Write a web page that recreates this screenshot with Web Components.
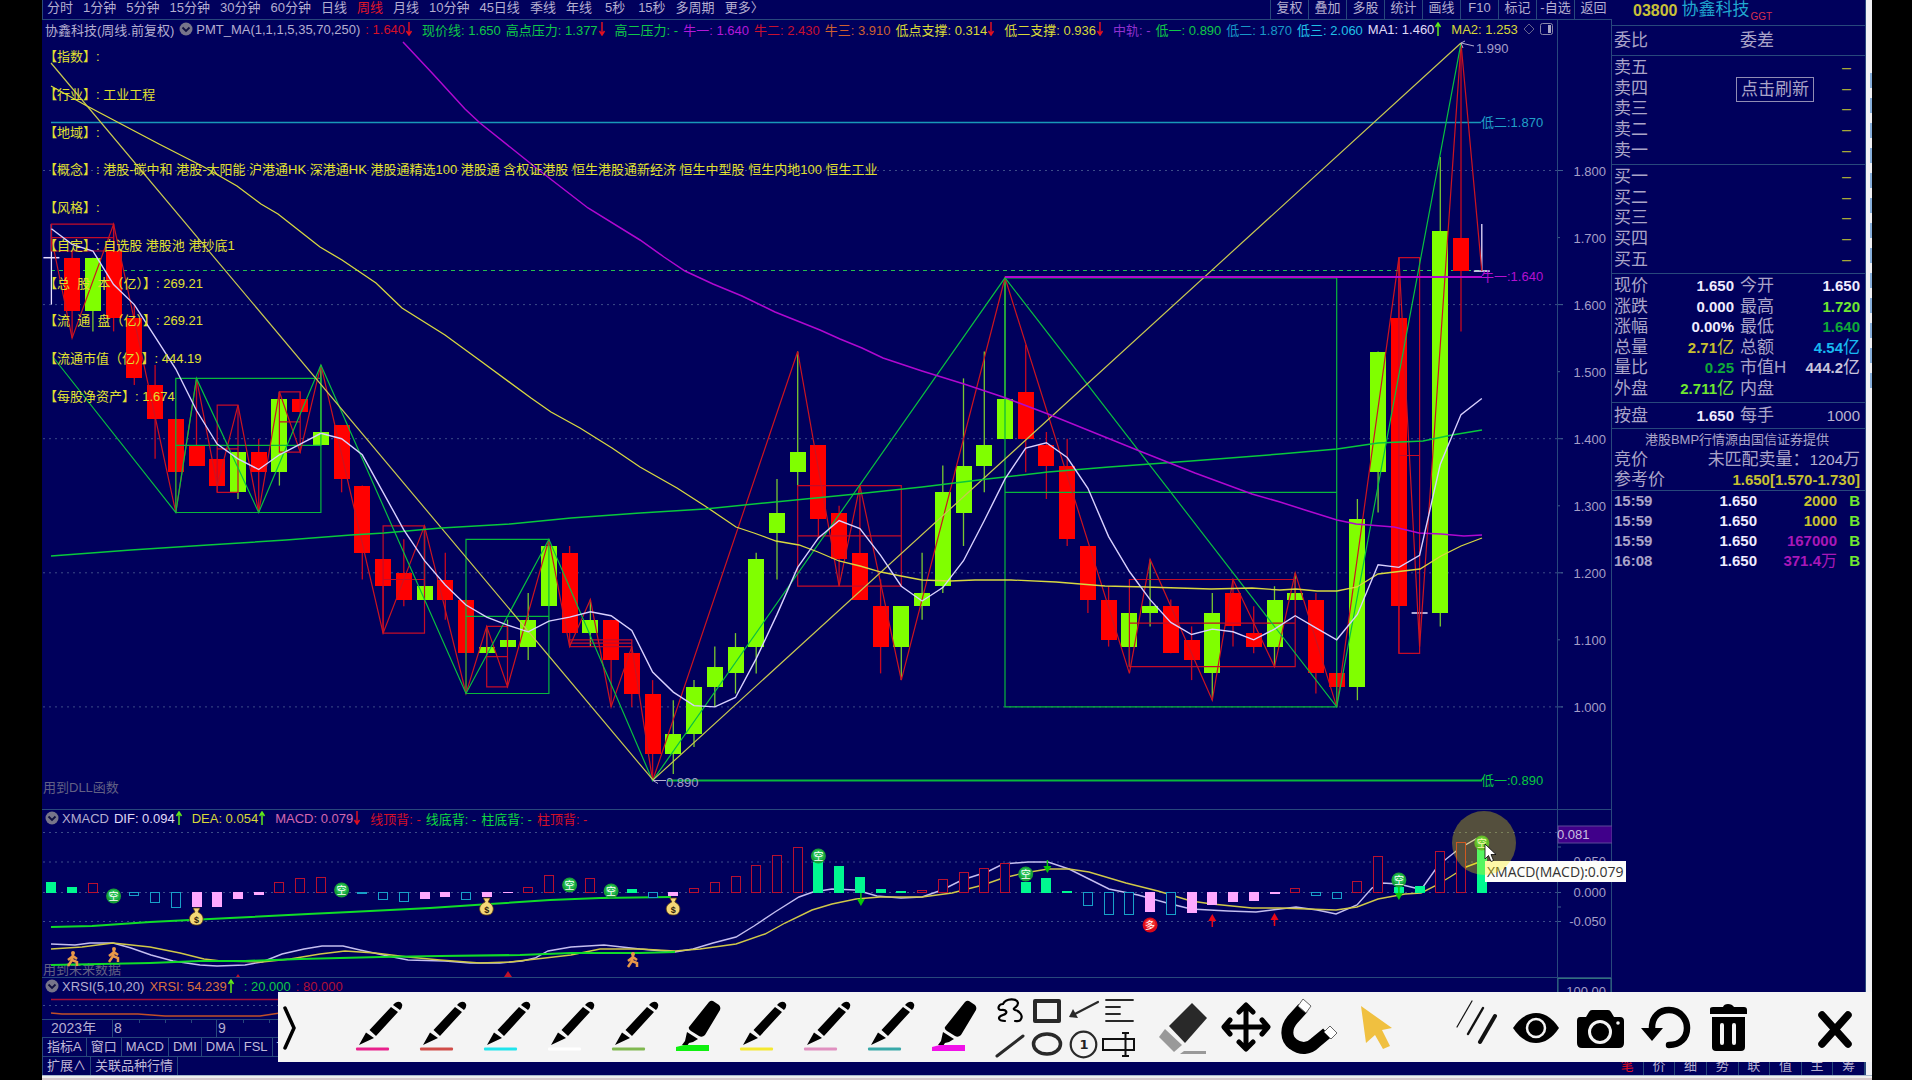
<!DOCTYPE html>
<html lang="zh-CN">
<head>
<meta charset="utf-8">
<title>协鑫科技 周线</title>
<style>
html,body{margin:0;background:#000}
body{font-family:"Liberation Sans","Noto Sans CJK SC",sans-serif;font-size:13px;color:#b4aed0;
 --bg:#00005c;--rule:#28487c;--cyan:#20a8d0}
</style>
</head>
<body>
<stock-app></stock-app>
<script>
const define=(name,html,ready)=>{
  const t=document.createElement('template');
  t.innerHTML=html;
  customElements.define(name,class extends HTMLElement{
    connectedCallback(){
      if(this.shadowRoot)return;
      this.attachShadow({mode:'open'}).append(t.content.cloneNode(true));
      if(ready)ready(this.shadowRoot,this);
    }
  });
};
const BTN='button{font:inherit;color:inherit;background:none;border:0;padding:0;margin:0;white-space:nowrap;line-height:inherit}';
const UP='<svg width="12" height="14" viewBox="0 0 12 14"><path d="M4 14V2M1.5 5L4 1L6.500 5" stroke="#60e818" stroke-width="1.500" fill="none"/></svg>';
const DOWN='<svg width="12" height="14" viewBox="0 0 12 14"><path d="M4 0V12M1.500 9L4 13L6.500 9" stroke="#e01020" stroke-width="1.500" fill="none"/></svg>';

/* geometry shared by all panes: one bar every STEP units, 70 bars */
const X0=51.4,STEP=20.73,bx=i=>+(X0+STEP*i).toFixed(1);
const py=p=>+(170.5+(1.8-p)*670.5).toFixed(1);
const line=(pts,c,w=1)=>`<polyline points="${pts}" fill="none" stroke="${c}" stroke-width="${w}"/>`;
const zig=a=>a.map(([i,p])=>bx(i)+','+py(p)).join(' ');

/* ---------- period bar ---------- */
define('period-bar',`<style>:host{display:flex;justify-content:space-between;height:19px;line-height:16px;border-bottom:1px solid var(--rule);border-left:1px solid var(--rule)}
${BTN} button{padding-bottom:3px}nav{display:flex}.p{gap:10px;padding-left:4px}.p .on{color:#e01828}.p .s{padding:0 3px 3px}
.t button{width:38px;box-sizing:border-box;border-left:1px solid var(--rule);text-align:center}</style>
<nav class="p"></nav><nav class="t"></nav>`,r=>{
  r.querySelector('.p').innerHTML='分时 1分钟 5分钟 15分钟 30分钟 60分钟 日线 周线 月线 10分钟 45日线 季线 年线 5秒 15秒 多周期 更多〉'.split(' ')
   .map(s=>`<button class="${s=='周线'?'on':s=='5秒'?'s':''}">${s}</button>`).join('');
  r.querySelector('.t').innerHTML='复权 叠加 多股 统计 画线 F10 标记 -自选 返回'.split(' ').map(s=>`<button>${s}</button>`).join('');
});

/* ---------- indicator header: one legend item each ---------- */
define('legend-item',`<style>:host{display:flex;align-items:center;white-space:pre}span{display:flex}</style><slot></slot><span></span>`,(r,h)=>{
  const d=h.getAttribute('dir-mark');if(d)r.querySelector('span').innerHTML=d=='up'?UP:DOWN;
  h.style.color=h.getAttribute('tint');
});
define('legend-row',`<style>:host{display:flex;gap:5px;align-items:center;height:18px;padding-left:3px;white-space:nowrap;z-index:1}
svg{flex:none;margin-right:-2px}</style><slot name="lead"></slot><svg width="14" height="14" viewBox="0 0 14 14"><circle cx="7" cy="7" r="6.500" fill="#77758a"/><path d="M3.500 5.500L7 9L10.500 5.500" fill="none" stroke="#101040" stroke-width="1.800"/></svg><slot></slot>`);
const items=a=>a.map(([t,c,d])=>`<legend-item tint="${c}"${d?` dir-mark="${d}"`:''}>${t}</legend-item>`).join('');

/* ---------- candle chart: kind, body top, body bottom, high, low ---------- */
const C=`w 1.67 1.67 1.72 1.60|r 1.67 1.59 1.68 1.55|g 1.67 1.59 1.67 1.56|r 1.68 1.58 1.72 1.56|r 1.58 1.49 1.60 1.48|r 1.48 1.43 1.51 1.37|r 1.43 1.35 1.43 1.29|r 1.39 1.36 1.49 1.36|r 1.37 1.33 1.37 1.32|g 1.38 1.32 1.38 1.31|r 1.38 1.35 1.40 1.29|g 1.46 1.35 1.47 1.33|r 1.46 1.44 1.47 1.44|g 1.41 1.39 1.51 1.39|r 1.42 1.34 1.42 1.32|r 1.33 1.23 1.33 1.19|r 1.22 1.18 1.22 1.11|r 1.20 1.16 1.25 1.15|g 1.18 1.16 1.27 1.16|r 1.19 1.16 1.23 1.13|r 1.16 1.08 1.16 1.02|g 1.09 1.08 1.12 1.08|g 1.10 1.09 1.13 1.09|g 1.13 1.09 1.17 1.07|g 1.24 1.15 1.25 1.15|r 1.23 1.11 1.24 1.09|g 1.13 1.11 1.16 1.09|r 1.13 1.07 1.13 1.00|r 1.08 1.02 1.09 1.00|r 1.02 0.93 1.04 0.89|g 0.96 0.93 1.01 0.90|g 1.03 0.96 1.04 0.94|g 1.06 1.03 1.09 1.00|g 1.09 1.05 1.11 1.02|g 1.22 1.09 1.23 1.05|g 1.29 1.26 1.34 1.19|g 1.38 1.35 1.53 1.33|r 1.39 1.28 1.39 1.25|r 1.29 1.22 1.30 1.18|r 1.23 1.16 1.33 1.16|r 1.15 1.09 1.19 1.05|g 1.15 1.09 1.15 1.04|g 1.17 1.15 1.23 1.13|g 1.32 1.18 1.36 1.17|g 1.36 1.29 1.49 1.24|g 1.39 1.36 1.53 1.32|g 1.46 1.40 1.64 1.40|r 1.47 1.40 1.54 1.35|r 1.39 1.36 1.41 1.31|r 1.36 1.25 1.40 1.24|r 1.24 1.16 1.24 1.14|r 1.16 1.10 1.18 1.09|g 1.14 1.09 1.14 1.06|g 1.15 1.14 1.22 1.12|r 1.15 1.08 1.16 1.08|r 1.10 1.07 1.12 1.04|g 1.14 1.05 1.17 1.01|r 1.17 1.12 1.19 1.09|r 1.11 1.09 1.15 1.08|g 1.16 1.09 1.18 1.06|g 1.17 1.16 1.20 1.16|r 1.16 1.05 1.17 1.02|r 1.05 1.03 1.05 1.00|g 1.28 1.03 1.31 1.01|g 1.53 1.35 1.53 1.29|r 1.58 1.15 1.67 1.08|w 1.14 1.14 1.14 1.14|g 1.71 1.14 1.82 1.12|r 1.70 1.65 1.99 1.56|w 1.65 1.65 1.72 1.65`
 .split('|').map(s=>{const a=s.split(' ');return{k:a[0],t:+a[1],b:+a[2],h:+a[3],l:+a[4]}});
const close=c=>c.k=='g'?c.t:c.b;
function candleSvg(){
  let s='';
  for(const p of[1.8,1.6,1.4,1.2,1])s+=`<path d="M43 ${py(p)}H1563" stroke="#3c4c88" stroke-dasharray="2 4"/>`;
  for(let k=0;k<9;k++){const p=1+k/10,y=py(p);s+=`<path d="M1557 ${y}h${k%2?3:6}" stroke="#3c5c8c"/><text x="1606" y="${y+5}" text-anchor="end">${p.toFixed(3)}</text>`}
  s+='<path d="M1557.500 20V809M1611.500 20V809" stroke="var(--rule)"/>';
  s+=`<path d="M51 122.500H1481" stroke="#1898b8" stroke-width="1.500"/><path d="M51 270.500H1490" stroke="#28c050" stroke-dasharray="4 4"/>`;
  C.forEach((c,i)=>{
    const x=bx(i),col=c.k=='r'?'#ff0000':c.k=='g'?'#80ff00':'#e8e0ff';
    if(c.h>c.l)s+=`<path d="M${x} ${py(c.h)}V${py(c.l)}" stroke="${c.k=='r'?'#c80820':c.k=='g'?'#78c830':col}" stroke-width="1.300"/>`;
    s+=c.k=='w'?`<path d="M${x-8} ${py(c.t)}h16" stroke="${col}" stroke-width="1.500"/>`
      :`<rect x="${x-8}" y="${py(c.t)}" width="16" height="${(py(c.b)-py(c.t)).toFixed(1)}" fill="${col}" shape-rendering="crispEdges"/>`;
  });
  const box=(a,b,hi,lo,c)=>{const m=(hi+lo)/2;return`<path d="M${bx(a)} ${py(hi)}H${bx(b)}V${py(lo)}H${bx(a)}ZM${bx(a)} ${py(m)}H${bx(b)}" fill="none" stroke="${c}" stroke-width="1.200"/>`};
  for(const b of[[0,3,1.72,1.68],[8,9,1.45,1.32],[11,12,1.47,1.38],[16,18,1.27,1.11],[21,22,1.12,1.03],[25,28,1.1,1.09],[36,41,1.33,1.18],[52,60,1.19,1.06],[65,66,1.67,1.08]])s+=box(...b,'#c40c28');
  for(const b of[[6,13,1.49,1.29],[20,24,1.25,1.02],[46,62,1.64,1]])s+=box(...b,'#08b83c');
  s+=line(zig([[0,1.7],[1,1.55],[3,1.72],[6,1.29],[7,1.49],[8,1.33],[9,1.45],[10,1.29],[11,1.47],[12,1.38],[13,1.51],[16,1.11],[18,1.27],[20,1.02],[21,1.12],[22,1.03],[24,1.25],[25,1.09],[26,1.16],[27,1],[28,1.09],[29,.89],[36,1.53],[38,1.18],[39,1.33],[41,1.04],[46,1.64],[52,1.05],[53,1.22],[56,1.01],[57,1.19],[59,1.06],[60,1.2],[62,1],[65,1.67],[66,1.09],[68,1.99],[69,1.65]]),'#cc1420',1.2);
  s+=line('53,357 '+zig([[6,1.29],[7,1.49],[10,1.29],[13,1.51],[20,1.02],[24,1.25],[29,.89],[46,1.64],[62,1],[68,1.99]]),'#08c040',1.2);
  s+=line('51,63 653,780 1461,43','#c8c850',1.2);
  s+=line('51,86 87,106 159,144 204,167 237,186 261,204 278,214 320,247 342,260 376,283 402,308 445,335 482,362 531,398 551,412 580,428 612,448 640,467 677,488 705,506 736,527 754,533 776,541 799,545 818,552 839,561 860,566 881,572 901,576 922,580 950,581 975,580 1011,580 1056,582 1105,586 1146,587 1211,589 1252,588 1280,590 1296,589 1317,591 1337,591 1357,587 1378,574 1420,569 1441,556 1461,546 1482,538','#d8d840',1.3);
  s+=line('51,556 131,550 208,545 286,540 351,535 384,533 441,528 510,524 571,518 640,513 705,509 775,502 856,494 922,487 987,479 1048,472 1109,467 1191,461 1280,454 1337,449 1378,443 1423,441 1452,435 1482,430','#08c83c',1.5);
  s+=line('403,42 433,74 465,109 480,123 535,167 588,208 640,240 664,257 685,271 713,284 742,296 775,312 820,330 840,339 862,348 883,358 922,371 964,384 1003,397 1048,414 1142,452 1195,473 1252,494 1280,502 1305,510 1337,520 1356,524 1394,527 1419,533 1441,534 1464,536 1482,535','#b008d0',1.5);
  const ma=C.map((c,i)=>i<4?[1.713,1.69,1.68,1.63][i]:C.slice(i-4,i+1).reduce((t,q)=>t+close(q),0)/5);
  s+=line(zig(ma.map((p,i)=>[i,p])),'#d8d0ff',1.4);
  s+=`<path d="M${bx(46)} 277H1482" stroke="#b408d0" stroke-width="2"/><path d="M667 780.500H1482" stroke="#08b83c" stroke-width="2"/>`;
  s+=`<path d="M653 780.500h13M653 780.500l5 3M1461 43l13 3M1461 43l4 -2M1461 43l2 5" stroke="#b4aed0" fill="none"/>
  <text x="666" y="787">0.890</text><text x="1476" y="53">1.990</text>
  <text x="1481" y="127" style="fill:#20a0c8">低二:1.870</text><text x="1481" y="281" style="fill:#b410d0">牛一:1.640</text><text x="1481" y="785" style="fill:#08c840">低一:0.890</text>
  <text x="43" y="792" style="fill:#626084">用到DLL函数</text>`;
  return s;
}
define('candle-chart',`<style>:host{display:grid}:host>*{grid-area:1/1}
legend-row{grid-area:1/1;align-self:start}svg{display:block;width:100%;height:auto;grid-area:1/1}text{font-size:13px;fill:#a49ec8}
ul{list-style:none;margin:18px 0 0;padding:0 0 0 2px;color:#e0e030;align-self:start;height:377px;display:grid;grid-auto-rows:minmax(0,1fr);align-items:center;white-space:pre;z-index:1;line-height:19px}.corner{display:flex;gap:5px;align-items:center}.corner svg{width:auto}</style>
<svg viewBox="42 20 1570 789" class="plot"></svg>
<legend-row><span slot="lead">协鑫科技(周线.前复权)</span><span>PMT_MA(1,1,1,5,35,70,250)</span>${items([[': 1.640','#d41028','down'],['现价线: 1.650','#10c848'],['高点压力: 1.377','#10c848','down'],['高二压力: -','#10c848'],['牛一: 1.640','#b418d8'],['牛二: 2.430','#c81030'],['牛三: 3.910','#d06030'],['低点支撑: 0.314','#d8d838','down'],['低二支撑: 0.936','#d8d838','down'],['中轨: -','#9030d0'],['低一: 0.890','#10c848'],['低二: 1.870','#1898c8'],['低三: 2.060','#20c0e8'],['MA1: 1.460','#e0dcf8','up'],['MA2: 1.253','#d8d838']])}<span class="corner"><svg width="12" height="12" viewBox="0 0 12 12"><path d="M6 1L11 6L6 11L1 6Z" fill="none" stroke="#66648c"/></svg><svg width="14" height="12" viewBox="0 0 14 12"><rect x=".5" y=".5" width="12" height="11" rx="2" fill="none" stroke="#8886a8"/><path d="M8 2h3v8h-3z" fill="#a8a6c4"/></svg></span></legend-row>
<ul><li>【指数】:</li><li>【行业】: 工业工程</li><li>【地域】:</li><li>【概念】: 港股-碳中和 港股-太阳能 沪港通HK 深港通HK 港股通精选100 港股通 含权证港股 恒生港股通新经济 恒生中型股 恒生内地100 恒生工业</li><li>【风格】:</li><li>【自定】: 自选股 港股池 港抄底1</li><li>【总  股  本（亿）】: 269.21</li><li>【流  通  盘（亿）】: 269.21</li><li>【流通市值（亿）】: 444.19</li><li>【每股净资产】: 1.674</li></ul>`,
r=>r.querySelector('.plot').innerHTML=candleSvg());

/* ---------- MACD pane: kind + far edge of each bar; zero sits at 893 ---------- */
const M='g882 g887 r884 n0 c896 c903 c908 p908 p908 p900 p896 r883 r879 r878 n0 c894 c900 c902 p900 p898 c900 p898 p894 r888 r876 n0 r879 n0 g889 c898 p897 r889 r883 r877 r866 r856 r848 g862 g866 g877 g889 g891 r891 r880 r873 r869 r864 g882 g878 g891 c906 c915 c915 p913 c915 p914 p906 p903 p902 p895 r889 c896 c899 r882 r857 g887 g886 r852 r843 g848'.split(' ');
function macdSvg(){
  let s='';
  for(const y of[832.5,862,892.5,921.5])s+=`<path d="M43 ${y}H1557" stroke="#3c4c88" stroke-dasharray="2 4"/>`;
  for(const y of[847,862,877,892.5,907,921.5])s+=`<path d="M1557 ${y}h4" stroke="#3c5c8c"/>`;
  s+='<path d="M1557.500 809V977M1611.500 809V977" stroke="var(--rule)"/><rect x="1558" y="826" width="54" height="17" fill="#40008a" stroke="#5c4898"/>';
  s+='<text x="1557" y="839" style="fill:#c8c0e0">0.081</text><text x="1606" y="866" text-anchor="end">0.050</text><text x="1606" y="897" text-anchor="end">0.000</text><text x="1606" y="926" text-anchor="end">-0.050</text>';
  s+='<text x="43" y="974" style="fill:#626084">用到未来数据</text>';
  s+=line('51,944 75,945 90,943 113,943 131,948 151,955 173,961 200,965 217,966 245,965 262,962 282,954 304,949 322,946 343,946 360,950 388,956 408,960 445,961 470,963 500,963 522,961 535,958 548,951 571,947 604,945 640,949 675,952 693,949 713,943 736,937 754,926 775,912 799,897 813,892 832,889 856,890 877,896 901,898 922,897 942,890 962,880 987,872 1003,864 1028,862 1048,862 1069,869 1089,879 1109,889 1138,895 1167,903 1191,909 1228,911 1256,912 1280,909 1296,907 1317,910 1336,914 1357,905 1372,888 1382,883 1399,884 1415,888 1423,887 1435,870 1445,860 1460,848 1476,839 1482,838','#c4bef0',1.4);
  s+=line('51,949 82,947 113,943 150,947 180,953 204,959 221,961 262,962 290,959 320,954 345,951 375,953 408,957 440,960 480,963 510,962 545,958 571,955 600,949 640,949 675,951 700,949 736,944 765,934 785,923 812,910 832,904 856,899 880,897 922,897 952,893 983,885 1003,878 1024,873 1048,869 1069,869 1089,872 1126,883 1158,891 1191,901 1212,904 1252,908 1280,908 1336,910 1357,907 1378,899 1405,894 1421,893 1435,886 1450,877 1466,867 1482,861','#d0c848',1.4);
  s+=line('51,927 92,926 150,922 230,918 308,914 350,912 430,908 490,904 550,900 600,898 671,897','#10dc28',2);
  s+=line('51,965 150,963 200,961 245,961 300,959 380,957 440,956 520,955 571,953 640,953 675,952','#10dc28',2);
  M.forEach((m,i)=>{
    const k=m[0],y=+m.slice(1);if(k=='n')return;
    const a=Math.min(y,893),h=Math.max(1,Math.abs(893-y)),x=Math.round(bx(i))-5;
    s+=k=='g'?`<rect x="${x}" y="${a}" width="10" height="${h}" fill="#00f890"/>`
     :k=='p'?`<rect x="${x}" y="${a-1}" width="10" height="${h}" fill="#ffa8ff"/>`
     :`<rect x="${x+.5}" y="${a-.5}" width="9" height="${h}" fill="#00005c" stroke="${k=='r'?'#b81030':'#18a0c8'}"/>`;
  });
  const ball=(i,y,t,c1,c2)=>`<circle cx="${bx(i)}" cy="${y}" r="7.500" fill="${c1}"/><ellipse cx="${bx(i)}" cy="${y-1}" rx="5.500" ry="5" fill="${c2}"/><text x="${bx(i)}" y="${y+4}" text-anchor="middle" style="fill:#fff;font-size:10px">${t}</text>`;
  for(const[i,y]of[[3,896],[14,890],[25,885],[27,891],[37,856],[47,874],[65,880],[69,843]])s+=ball(i,y,'空','#18a038','#28c058');
  s+=ball(53,925,'多','#d80818','#f03030');
  for(const[i,y]of[[7,917],[21,907],[30,907]]){const x=bx(i);s+=`<path d="M${x-3.5} ${y-9}h7l-2 4c4 2 5.500 5 5 8c-1 4-3 5-6.500 5s-6-1-7-5c-.5-3 1-6 5.500-8z" fill="#f4d878" stroke="#60400c" stroke-width=".8"/><text x="${x}" y="${y+6}" text-anchor="middle" style="fill:#302008;font-size:9px;font-weight:bold">$</text>`}
  const man=(x,y)=>`<circle cx="${x}" cy="${y-6}" r="2" fill="#e89848"/><path d="M${x} ${y-5}L${x-1} ${y+1}L${x-5} ${y+7}M${x-1} ${y+1}L${x+4} ${y+3}V${y+7}M${x-5} ${y+1}L${x} ${y-3}L${x+4} ${y}" fill="none" stroke="#e89848" stroke-width="2.500"/>`;
  s+=man(73,959)+man(114,955)+man(633,960);
  const arr=(x,y,d,c)=>`<path d="M${x} ${y}v${d*8}" stroke="${c}" stroke-width="1.500"/><path d="M${x-4} ${y+d*6}h8l-4 ${d*7}z" fill="${c}"/>`;
  const rise=(x,y)=>`<path d="M${x} ${y}v-8" stroke="#e80818" stroke-width="1.500"/><path d="M${x-4} ${y-6}h8l-4 -7z" fill="#e80818"/>`;
  s+=arr(bx(39)+1,893,1,'#08c808')+arr(bx(48)+1,860,1,'#08c808')+arr(bx(65),887,1,'#08c808')+rise(bx(56),927)+rise(bx(59),926);
  s+='<path d="M236 977l2-3l2 3zM504 977l4-6l4 6z" fill="#c01028"/>';
  return s;
}
define('macd-chart',`<style>:host{display:grid}legend-row,svg{grid-area:1/1}legend-row{align-self:start}svg{display:block;width:100%;height:auto}text{font-size:13px;fill:#a49ec8}</style>
<svg viewBox="42 809 1570 168"></svg><legend-row><span>XMACD</span>${items([['DIF: 0.094','#e0dcf8','up'],['DEA: 0.054','#d8d838','up'],['MACD: 0.079','#d468b0','down'],['线顶背: -','#d41028'],['线底背: -','#10d840'],['柱底背: -','#10d840'],['柱顶背: -','#d41028']])}</legend-row>`,
r=>r.querySelector('svg').innerHTML='<path d="M42 809.500H1612" stroke="var(--rule)"/>'+macdSvg());

define('rsi-chart',`<style>:host{display:grid}legend-row,svg{grid-area:1/1}legend-row{align-self:start}svg{display:block;width:100%;height:auto}text{font-size:13px;fill:#a49ec8}</style>
<svg viewBox="42 977 1570 42"><path d="M42 977.500H1612M1557.500 977V1019M1611.500 977V1019" stroke="var(--rule)" fill="none"/><path d="M43 1005.500H1557" stroke="#3c4c88" stroke-dasharray="2 4"/><path d="M51 999.500H1482" stroke="#a81038" stroke-width="1.500"/><polyline points="51,1013 62,1014 138,1014 165,1016 260,1016 280,1013 320,1010" fill="none" stroke="#c05028" stroke-width="1.500"/><rect x="1558" y="978.500" width="53" height="40" fill="none" stroke="#30707c"/><text x="1606" y="996" text-anchor="end">100.00</text></svg>
<legend-row><span>XRSI(5,10,20)</span>${items([['XRSI: 54.239','#d87040','up'],[': 20.000','#10c848'],[': 80.000','#b01038']])}</legend-row>`);

define('date-axis',`<style>:host{display:flex;height:17px;line-height:17px;border-top:1px solid var(--rule);padding-left:9px;box-sizing:content-box;font-size:14px}
span{box-sizing:border-box}.y{width:61px}.m{width:104px;border-left:1px solid var(--rule);padding-left:1px;background:linear-gradient(var(--rule),var(--rule)) 26px 0/1px 3px no-repeat,linear-gradient(var(--rule),var(--rule)) 52px 0/1px 3px no-repeat,linear-gradient(var(--rule),var(--rule)) 78px 0/1px 3px no-repeat}</style>
<span class="y">2023年</span><span class="m">8</span><span class="m">9</span>`);

define('tab-strip',`<style>:host{display:flex;height:18px;line-height:16px;border-top:1px solid var(--rule);border-left:1px solid var(--rule)}
::slotted(button){font:inherit;color:#c0bad8;background:none;border:0;border-right:1px solid var(--rule);padding:0 4px 1px;margin:0;white-space:nowrap}</style><slot></slot>`);

/* ---------- quote panel ---------- */
define('quote-row',`<style>:host{display:flex;justify-content:space-between;align-items:center;white-space:pre}</style><slot></slot>`);
define('quote-panel',`<style>:host{display:flex;flex-direction:column;font-size:17px;line-height:20px;color:#aaa4c8;border-right:1px solid var(--rule)}
section,header{border-bottom:1px solid var(--rule);box-sizing:border-box;padding:0 5px 0 2px;display:grid}
header{height:26px;grid-auto-flow:column;justify-content:start;align-items:center;gap:4px;color:var(--cyan);padding:0 0 3px 21px}
header b{font-size:16px;color:#c8c038}header sub{font-size:10px;line-height:10px;color:#d83050;margin-left:1px;vertical-align:-5px}
.w{height:30px;grid-template-columns:126px 1fr;align-items:center}
.five{height:109px;padding:2px 14px 3px 2px;grid-template-columns:1fr auto;grid-auto-rows:minmax(0,1fr);align-items:center;position:relative}
.five i{font-style:normal;color:#a8a838;font-size:16px}
.five button{position:absolute;left:124px;top:21px;height:25px;width:78px;font:inherit;color:inherit;background:var(--bg);border:1px solid #908cb4;padding:0;line-height:22px;white-space:nowrap}
.q{height:129px;grid-template-columns:56px 64px 50px 1fr;grid-auto-rows:minmax(0,1fr);align-items:center;padding-top:2px;padding-bottom:3px}
.q.one{height:26px;padding-top:0;padding-bottom:0}.v{font-size:15px;font-weight:bold;color:#f0ecff;text-align:right;white-space:nowrap}.v span,.k{font-size:17px;font-weight:normal}
.q .k:nth-of-type(4n+3){padding-left:6px;white-space:nowrap}
.n{font-weight:normal;color:#b8b4d0}.ye{color:#c8c030}.gr{color:#10a838}.li{color:#70e830}.cy{color:#18b8f0}
.a{height:62px;grid-template-rows:21px 20px 20px;align-items:center}.a quote-row{white-space:nowrap}.a p{margin:0;font-size:13px;text-align:center}
table{border-collapse:collapse;width:100%;font-size:15px}td{padding:0;height:20px;line-height:20px;text-align:right;font-weight:bold}td:first-child{text-align:left;padding-left:2px;width:40px}td:nth-child(2){color:#f0ecff;width:103px}td:nth-child(4){width:23px;padding-right:5px;color:#70e830}.m{color:#a818b8}td span{font-weight:normal;font-size:16px}
nav{margin-top:auto;display:flex;height:18px;border-top:1px solid var(--rule);font-size:13px}nav button{flex:1;font:inherit;color:#b4aed0;background:none;border:0;border-right:1px solid var(--rule);padding:0;line-height:18px}nav button.on{color:#e01020}</style>
<header><b>03800</b><span>协鑫科技<sub>GGT</sub></span></header>
<section class="w"><span>委比</span><span>委差</span></section>
<section class="five s"></section><section class="five b"></section>
<section class="q"><span class="k">现价</span><span class="v">1.650</span><span class="k">今开</span><span class="v">1.650</span>
<span class="k">涨跌</span><span class="v">0.000</span><span class="k">最高</span><span class="v li">1.720</span>
<span class="k">涨幅</span><span class="v">0.00%</span><span class="k">最低</span><span class="v gr">1.640</span>
<span class="k">总量</span><span class="v ye">2.71<span>亿</span></span><span class="k">总额</span><span class="v cy">4.54<span>亿</span></span>
<span class="k">量比</span><span class="v gr">0.25</span><span class="k">市值H</span><span class="v" style="color:#c8c4dc">444.2<span>亿</span></span>
<span class="k">外盘</span><span class="v li">2.711<span>亿</span></span><span class="k">内盘</span><span class="v"></span></section>
<section class="q one"><span class="k">按盘</span><span class="v">1.650</span><span class="k">每手</span><span class="v n">1000</span></section>
<section class="a"><p>港股BMP行情源由国信证券提供</p><quote-row><span class="k">竞价</span><span>未匹配卖量：<span class="v n">1204</span>万</span></quote-row><quote-row><span class="k">参考价</span><span class="v ye">1.650[1.570-1.730]</span></quote-row></section>
<table><tr><td>15:59<td>1.650<td class="ye">2000<td>B</tr><tr><td>15:59<td>1.650<td class="ye">1000<td>B</tr><tr><td>15:59<td>1.650<td class="m">167000<td>B</tr><tr><td>16:08<td>1.650<td class="m">371.4<span>万</span><td>B</tr></table>
<nav></nav>`,r=>{
  const five=(k,a)=>[...a].map(c=>`<span>${k}${c}</span><i>–</i>`).join('');
  r.querySelector('.s').innerHTML=five('卖','五四三二一')+'<button>点击刷新</button>';
  r.querySelector('.b').innerHTML=five('买','一二三四五');
  r.querySelector('nav').innerHTML=[...'笔价细势联值主筹'].map((c,i)=>`<button${i?'':' class="on"'}>${c}</button>`).join('');
});

/* ---------- drawing toolbar ---------- */
define('tool-button',`<style>:host{display:block;width:64px;height:70px}:host([small]){width:36px;height:34px}button{display:block;width:100%;height:100%;padding:0;border:0;background:none}svg{display:block;width:100%;height:100%;overflow:visible}</style><button><svg></svg></button>`,(r,h)=>{
  const v=r.querySelector('svg'),n=h.getAttribute('icon'),c=h.getAttribute('ink');
  r.querySelector('button').setAttribute('aria-label',n);
  v.setAttribute('viewBox',h.hasAttribute('small')?'0 0 36 34':n=='expand'?'0 0 62 70':'0 0 64 70');
  v.innerHTML=ICONS[n].replace('INK',c);
});
const S='fill="none" stroke="#292929" stroke-linecap="round"';
const ICONS={
 expand:'<path d="M7 16L16 36L7 56" fill="none" stroke="#000" stroke-width="3.500" stroke-linecap="round"/>',
 pen:'<path d="M29.500 38L51 15L58 20L36 44ZM53 13L55 11Q60 8 62 12Q63 15 60 18ZM26 40.500L34 46L19 53Z"/><rect x="16" y="55.500" width="33" height="3" rx="1" fill="INK"/>',
 marker:'<path d="M29 35L49 10Q51 8 53 9L59 13Q61 15 60 18L45 43Q42 46 39 44L31 39Q28 37 29 35ZM27 40L38 47L33 50L29 51L27 54L22 53L25 49Z"/><path d="M16 55L24 53H49V59H16Z" fill="INK"/>',
 squiggle:'<path d="M13 28C6 28 5 24 11 22C17 20 14 16 9 17C5 17 6 11 11 11C14 5 25 5 26 10C26 15 19 15 23 17C28 18 31 23 29 26C28 29 25 28 23 28" fill="none" stroke="#000" stroke-width="2.200" stroke-linecap="round"/>',
 square:'<rect x="6" y="8" width="24" height="20" fill="none" stroke="#292929" stroke-width="4" stroke-linejoin="round"/>',
 arrow:`<path d="M32 9L5 23" ${S} stroke-width="2.200"/><path d="M3 24L7 16L12 25Z" fill="#292929"/>`,
 lines:`<path d="M3 7H30M3 14H17M3 21H17M3 28H30" ${S} stroke-width="1.800"/>`,
 segment:`<path d="M5 29L31 9" ${S} stroke-width="3"/>`,
 ellipse:`<ellipse cx="18" cy="17" rx="13.500" ry="10" ${S} stroke-width="3.500"/>`,
 number:`<circle cx="17.500" cy="17.500" r="12.800" ${S} stroke-width="2.200"/><text x="18" y="22" text-anchor="middle" font-size="13" font-weight="bold" font-family="DejaVu Sans" fill="#222">1</text>`,
 textbox:'<path d="M0 12H31V23H0ZM19 6H26M22.500 6V29M19 29H26" fill="none" stroke="#111" stroke-width="2"/>',
 eraser:'<path d="M41 11L56 26L34 51L18 34Z" fill="#292929"/><path d="M14 37L31 53L23 60L8 45Z" fill="#999"/><path d="M33 59H55V62H29Z" fill="#999"/>',
 move:'<path d="M31 14V56M10 35H52M24 20L31 13L38 20M24 50L31 57L38 50M15 28L9 35L15 42M47 28L53 35L47 42" fill="none" stroke="#000" stroke-width="5" stroke-linecap="round" stroke-linejoin="round"/>',
 magnet:'<path d="M24 16L14 27C6 36 7 47 14 52C22 58 30 57 36 51L48 41" fill="none" stroke="#000" stroke-width="12"/><path d="M24 7L32 14L27 21L19 14ZM51 34L58 41L52 47L45 40Z" fill="#fff" stroke="#666" stroke-width="1"/>',
 pointer:'<path d="M18 14L49 36L39 38L47 54L40 57L32 43L23 51Z" fill="#f0c040"/>',
 strokes:'<g stroke="#111" stroke-linecap="round"><path d="M32 9L17 35" stroke-width="1.200"/><path d="M43 16L28 42" stroke-width="2.400"/><path d="M55 24L40 50" stroke-width="4"/></g>',
 eye:'<path d="M9 36Q19 21 32 21T55 36Q45 51 32 51T9 36Z"/><circle cx="32" cy="36" r="9" fill="none" stroke="#f4f4f4" stroke-width="2.500"/>',
 camera:'<path d="M12 25H18L21 20Q22 18 24 18H40Q42 18 43 20L46 25H52Q56 25 56 29V51Q56 56 51 56H14Q9 56 9 51V29Q9 25 12 25Z"/><circle cx="32" cy="40" r="10.500" fill="none" stroke="#f4f4f4" stroke-width="3"/><circle cx="50" cy="31" r="1.800" fill="#f4f4f4"/>',
 undo:'<path d="M20 36C20 24 28 18 37 18C49 18 55 28 55 36C55 46 48 53 37 53" fill="none" stroke="#000" stroke-width="6.500" stroke-linecap="round"/><path d="M9 36L31 36L20 49Z"/>',
 trash:'<path d="M14 22V17Q14 15 17 15H27Q28 12 32 12T38 15H48Q51 15 51 18V22ZM16 25H49V55Q49 59 45 59H20Q16 59 16 55Z"/><path d="M26 33V51M38 33V51" stroke="#f4f4f4" stroke-width="4" stroke-linecap="round"/>',
 close:'<path d="M19 23L45 52M45 23L19 52" stroke="#000" stroke-width="7.500" stroke-linecap="round"/>'
};
define('draw-toolbar',`<style>:host{display:flex;height:70px;background:#f4f4f4;box-sizing:border-box;padding-right:5px}
.first{width:62px}.grid{display:grid;grid-template-columns:repeat(4,36px);column-gap:1px;align-content:center;padding:0 12px}i{flex:1}i.m{flex:0 0 33px}</style>
<tool-button class="first" icon="expand"></tool-button>
<tool-button icon="pen" ink="#e8208c"></tool-button><tool-button icon="pen" ink="#d04c48"></tool-button><tool-button icon="pen" ink="#20e4ec"></tool-button><tool-button icon="pen" ink="#ffffff"></tool-button><tool-button icon="pen" ink="#80b850"></tool-button><tool-button icon="marker" ink="#10f010"></tool-button><tool-button icon="pen" ink="#f4e830"></tool-button><tool-button icon="pen" ink="#e090c0"></tool-button><tool-button icon="pen" ink="#38a8a8"></tool-button><tool-button icon="marker" ink="#f010e8"></tool-button>
<div class="grid"><tool-button small icon="squiggle"></tool-button><tool-button small icon="square"></tool-button><tool-button small icon="arrow"></tool-button><tool-button small icon="lines"></tool-button><tool-button small icon="segment"></tool-button><tool-button small icon="ellipse"></tool-button><tool-button small icon="number"></tool-button><tool-button small icon="textbox"></tool-button></div>
<tool-button icon="eraser"></tool-button><tool-button icon="move"></tool-button><tool-button icon="magnet"></tool-button><tool-button icon="pointer"></tool-button><i class="m"></i><tool-button icon="strokes"></tool-button><tool-button icon="eye"></tool-button><tool-button icon="camera"></tool-button><tool-button icon="undo"></tool-button><tool-button icon="trash"></tool-button><i></i><tool-button icon="close"></tool-button>`);

/* ---------- hover tip with pointer ---------- */
define('hover-tip',`<style>:host{display:block}.tip{margin:50px 0 0 33px;background:#fdfdfa;color:#333;font:14px/21px "Open Sans","Noto Sans",sans-serif;padding:0 2px;width:max-content}
.halo{position:absolute;left:0;top:0;width:64px;height:64px;border-radius:50%;background:rgba(255,240,0,.33)}svg{position:absolute;left:32px;top:32px}</style>
<div class="tip"><slot></slot></div><div class="halo"></div><svg width="14" height="20" viewBox="0 0 14 20"><path d="M1 1V16L4.500 12.500L7 18.500L9.500 17.500L7 11.500H12Z" fill="#fff" stroke="#000" stroke-width=".8"/></svg>`);

/* ---------- page ---------- */
define('stock-app',`<style>:host{display:block;position:relative;margin:0 40px 0 42px;background:var(--bg)}
.cols{display:grid;grid-template-columns:minmax(0,1fr) 254px 6px}
main{min-width:0;display:flex;flex-direction:column}
.edge{background:repeating-linear-gradient(#f0f0f4 0 9px,#88b0dc 9px 24px,#f0f0f4 24px 25px) right 64px/2px 330px no-repeat,#f0f0f4}
footer{height:5px;background:linear-gradient(#a8b8cc 0 1px,#eee 1px 3px,#d4c8cc 3px)}
draw-toolbar{position:absolute;left:236px;right:0;bottom:18px}hover-tip{position:absolute;right:356px;bottom:198px;height:71px;left:1410px}</style>
<div class="cols"><main><period-bar></period-bar><candle-chart></candle-chart><macd-chart></macd-chart><rsi-chart></rsi-chart><date-axis></date-axis>
<tab-strip><button>指标A</button><button>窗口</button><button>MACD</button><button>DMI</button><button>DMA</button><button>FSL</button><button>T</button></tab-strip>
<tab-strip><button>扩展∧</button><button>关联品种行情</button></tab-strip></main><quote-panel></quote-panel><div class="edge"></div></div>
<footer></footer><draw-toolbar></draw-toolbar><hover-tip>XMACD(MACD):0.079</hover-tip>`);
</script>
</body>
</html>
